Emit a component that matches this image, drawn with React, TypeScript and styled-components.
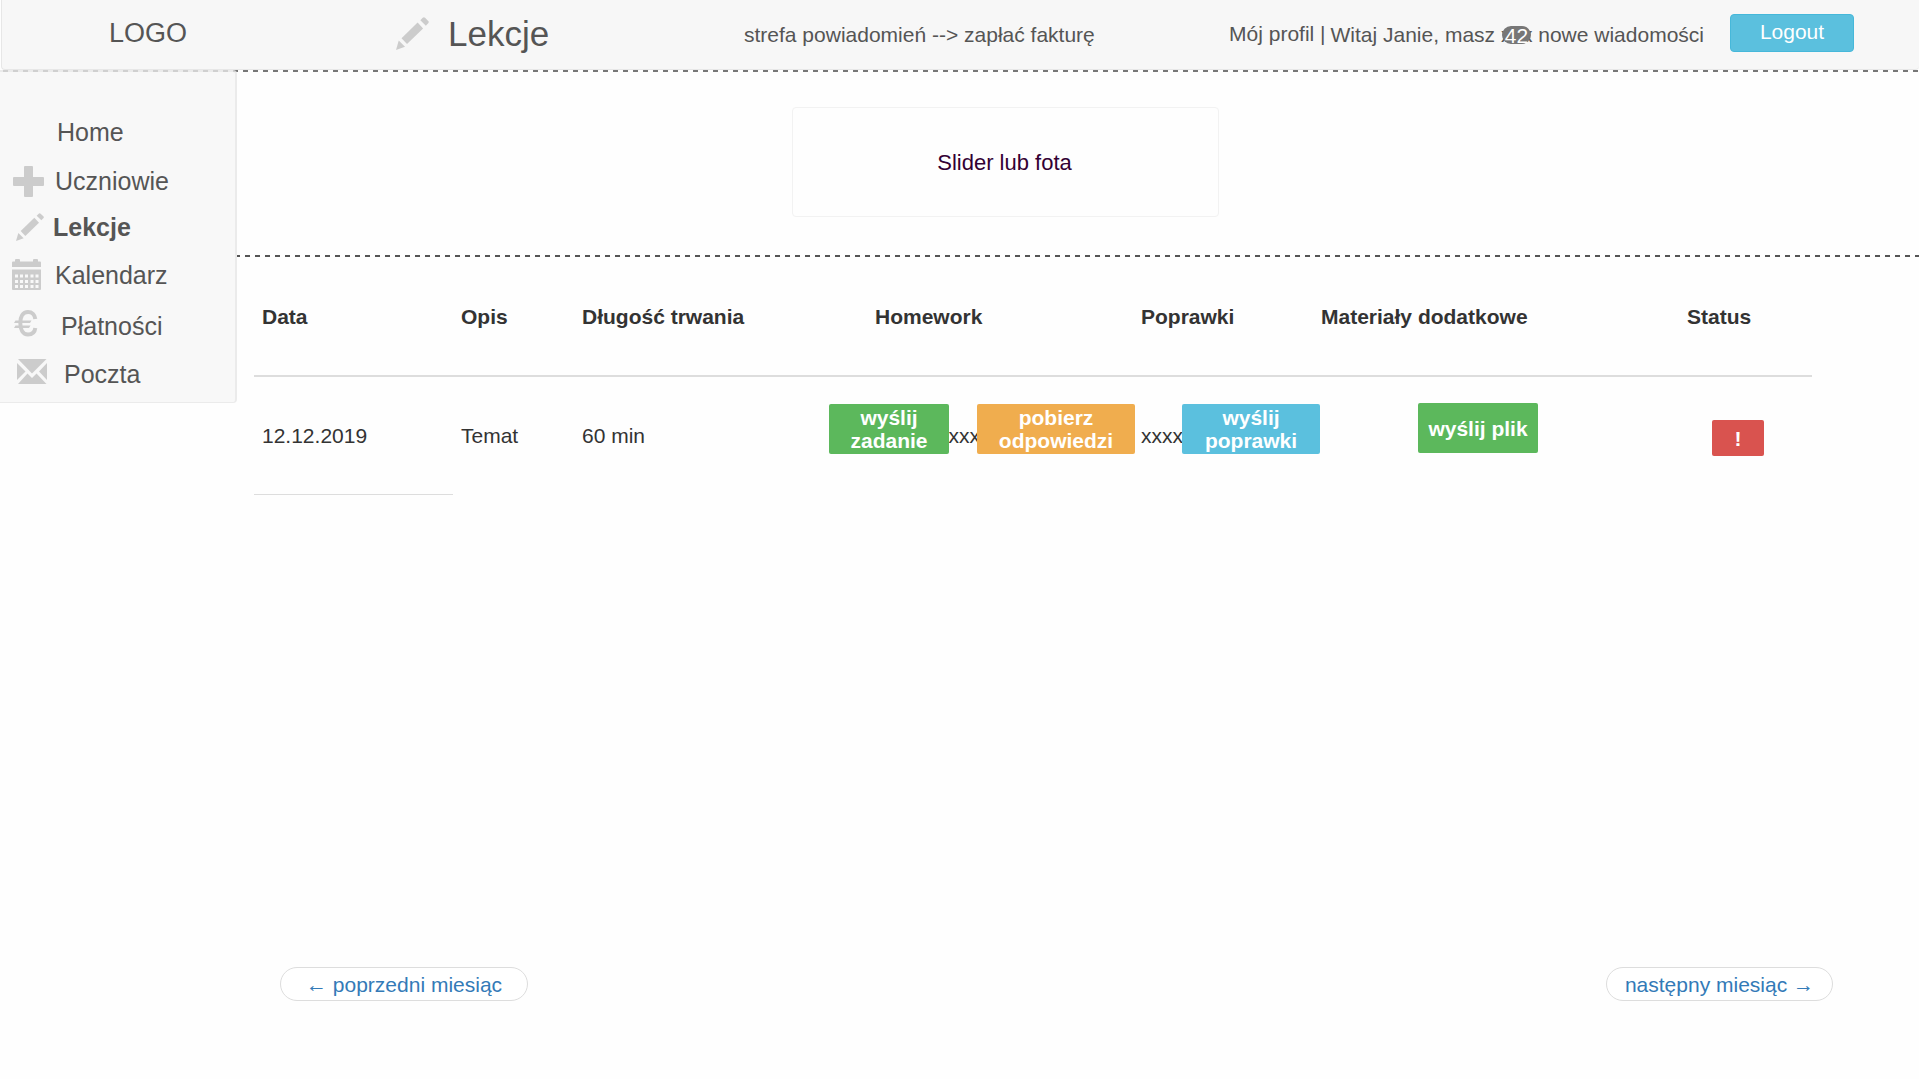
import React from "react";
import styled, { createGlobalStyle, css } from "styled-components";

const GlobalStyle = createGlobalStyle`
  *, *::before, *::after { box-sizing: border-box; }
  body {
    margin: 0;
    background: #fefefe;
    color: #333;
    font-family: "Liberation Sans", Arial, Helvetica, sans-serif;
    font-size: 21px;
    line-height: 23px;
  }
  button { font: inherit; cursor: pointer; }
  a { color: inherit; text-decoration: none; }
`;

const Shell = styled.div`
  display: flex;
  flex-direction: column;
  min-height: 100vh;
`;

const TopBar = styled.header`
  display: grid;
  grid-template-columns: 394px 348px 1fr auto;
  align-items: center;
  height: 70px;
  margin-left: 1px;
  padding: 0 65px 4px 0;
  background: #f7f7f7;
  border: 1px solid #e7e7e7;
  border-top: 0;
  border-right: 0;
  border-radius: 0 0 4px 4px;
  color: #555;
`;

const Dashes = styled.div<{ $color: string; $shift: number }>`
  height: 2px;
  background: repeating-linear-gradient(
      90deg,
      ${(p) => p.$color} 0 5px,
      transparent 5px 10px
    )
    ${(p) => p.$shift}px 0 / 10px 2px;
`;

const Brand = styled.a`
  padding-left: 107px;
  font-size: 27px;
  line-height: 32px;
`;

const PageTitle = styled.h1`
  display: flex;
  align-items: center;
  gap: 19px;
  margin: 0;
  padding-top: 2px;
  font-size: 35px;
  line-height: 40px;
  font-weight: 400;
`;

const Notice = styled.p`
  margin: 0;
  padding-top: 4px;
`;

const UserArea = styled.div`
  display: flex;
  align-items: center;
  white-space: nowrap;
`;

const ProfileLink = styled.a`
  padding-top: 2px;
`;

const Greeting = styled.p`
  margin: 0 26px 0 5px;
  padding-top: 4px;
`;

const Masked = styled.span`
  position: relative;
`;

const Badge = styled.span`
  position: absolute;
  left: 1px;
  top: 3px;
  width: 29px;
  height: 18px;
  border-radius: 9px;
  background: #777;
  color: #fff;
  line-height: 20px;
  text-align: center;
`;

const LogoutButton = styled.button`
  width: 124px;
  height: 38px;
  padding: 0 0 2px;
  border: 1px solid #46b8da;
  border-radius: 4px;
  background: #5bc0de;
  color: #fff;
`;

const Body = styled.div`
  display: flex;
  flex: 1;
  align-items: flex-start;
`;

const Sidebar = styled.nav`
  flex: 0 0 237px;
  position: relative;
  margin-top: -2px;
  padding: 36px 0 4px;
  background: #f8f8f8;
  background-clip: padding-box;
  border: solid rgba(231, 231, 231, 0.8);
  border-width: 2px 2px 1px 0;
  border-radius: 0 4px 4px 0;
  color: #555;
  font-size: 25px;
`;

const NavLink = styled.a<{ $height: number; $active?: boolean }>`
  display: flex;
  align-items: center;
  height: ${(p) => p.$height}px;
  font-weight: ${(p) => (p.$active ? 700 : 400)};
`;

const NavIcon = styled.span<{ $slot: number; $indent: number }>`
  display: flex;
  flex: none;
  width: ${(p) => p.$slot}px;
  padding-left: ${(p) => p.$indent}px;
`;

const Main = styled.main`
  display: flex;
  flex: 1;
  flex-direction: column;
  align-self: stretch;
  min-width: 0;
  padding-bottom: 78px;
`;

const Hero = styled.section`
  padding: 35px 0 38px 555px;
`;

const Slider = styled.div`
  display: flex;
  align-items: center;
  justify-content: center;
  width: 427px;
  height: 110px;
  padding-right: 2px;
  border: 1px solid #f2f2f2;
  border-radius: 4px;
  color: #330033;
  font-size: 22px;
`;

const TableArea = styled.section`
  padding: 0 107px 0 17px;
`;

const Table = styled.table`
  width: 100%;
  table-layout: fixed;
  border-collapse: separate;
  border-spacing: 0;
`;

const Column = styled.col<{ $width?: number }>`
  width: ${(p) => (p.$width ? `${p.$width}px` : "auto")};
`;

const HeadCell = styled.th`
  height: 120px;
  padding: 0 8px;
  border-bottom: 2px solid #ddd;
  text-align: left;
  white-space: nowrap;
`;

const Cell = styled.td<{ $ruled?: boolean; $indent?: number; $top?: number }>`
  position: relative;
  height: 118px;
  padding: 0 8px;
  border-bottom: 1px solid ${(p) => (p.$ruled ? "#ddd" : "transparent")};
  white-space: nowrap;
  ${(p) =>
    p.$top &&
    css`
      padding: ${p.$top}px 0 0 ${p.$indent}px;
      vertical-align: top;
    `}
`;

const tones = {
  green: "#5cb85c",
  orange: "#f0ad4e",
  blue: "#5bc0de",
  red: "#d9534f",
};

const Action = styled.button<{ $tone: keyof typeof tones; $width: number; $height?: number }>`
  display: block;
  width: ${(p) => p.$width}px;
  height: ${(p) => p.$height ?? 50}px;
  padding: 0;
  border: 0;
  border-radius: 2px;
  background: ${(p) => tones[p.$tone]};
  color: #fff;
  font-weight: 700;
  white-space: normal;
`;

const FloatingAction = styled(Action)<{ $left: number }>`
  position: absolute;
  z-index: 1;
  top: 27px;
  left: ${(p) => p.$left}px;
  padding: 0 16px;
`;

const Pager = styled.nav`
  display: flex;
  justify-content: space-between;
  margin-top: auto;
  padding: 0 86px 0 43px;
`;

const PagerLink = styled.a<{ $pad: number }>`
  height: 34px;
  padding: 5px ${(p) => p.$pad}px;
  border: 1px solid #ddd;
  border-radius: 17px;
  background: #fff;
  color: #337ab7;
`;

const Pencil = ({ size }: { size: number }) => (
  <svg width={size} height={size} viewBox="0 0 84 84" fill="#ccc" aria-hidden="true">
    <path d="M0 84 7 60 23 76Z" />
    <path d="M14 54 55 14 69 29 28 69Z" />
    <path d="M62 8 68 2Q71-1 74 2L82 10Q85 13 82 16L76 22Z" />
  </svg>
);

const Plus = () => (
  <svg width="31" height="31" viewBox="0 0 31 31" fill="#ccc" aria-hidden="true">
    <rect x="11" width="9" height="31" rx="1" />
    <rect y="11" width="31" height="9" rx="1" />
  </svg>
);

const Calendar = () => (
  <svg width="29" height="33" viewBox="0 0 29 33" fill="#ccc" aria-hidden="true">
    <path d="M0 8V3.5Q0 2.5 1 2.5H3V1Q3 0 4 0H7Q8 0 8 1V2.5H21V1Q21 0 22 0H25Q26 0 26 1V2.5H28Q29 2.5 29 3.5V8Z" />
    <path d="M0 10.5H29V30Q29 31 28 31H1Q0 31 0 30Z" />
    <g fill="#f8f8f8">
      {[15.5, 21, 26].map((y) =>
        [3, 8, 13, 18.5, 23.5].map((x) => (
          <rect key={`${x}-${y}`} x={x} y={y} width="3" height="3" />
        )),
      )}
    </g>
  </svg>
);

const Euro = () => (
  <svg width="24" height="33" viewBox="0 0 24 33" fill="none" stroke="#ccc" aria-hidden="true">
    <path d="M21.3 9C20.8 4.7 18 2 14 2C8.8 2 6.3 6.5 6.3 13S8.8 24.500 14 24.5C18 24.5 20.8 22 21.3 18" strokeWidth="4" />
    <path d="M0 13 1.5 10.5H17.5L16 13ZM0 18 1.5 15.5H16.5L15 18Z" fill="#ccc" stroke="none" />
  </svg>
);

const Envelope = () => (
  <svg width="30" height="31" viewBox="0 0 30 31" fill="#ccc" aria-hidden="true">
    <path d="M1 0H29.500L15 14.500Z" />
    <path d="M0 4 8.5 12.5 0 21Z" />
    <path d="M30 4 22 12.5 30 21Z" />
    <path d="M1 25 10.5 14.5 15 19 19.5 14.5 29.5 25Z" />
  </svg>
);

const navItems = [
  { label: "Home", slot: 57, indent: 0, height: 48, icon: null },
  { label: "Uczniowie", slot: 55, indent: 13, height: 50, icon: <Plus /> },
  { label: "Lekcje", slot: 53, indent: 16, height: 42, icon: <Pencil size={28} />, active: true },
  { label: "Kalendarz", slot: 55, indent: 12, height: 54, icon: <Calendar /> },
  { label: "Płatności", slot: 61, indent: 14, height: 48, icon: <Euro /> },
  { label: "Poczta", slot: 64, indent: 17, height: 48, icon: <Envelope /> },
];

const columns = [
  { title: "Data", width: 199 },
  { title: "Opis", width: 121 },
  { title: "Długość trwania", width: 293 },
  { title: "Homework", width: 266 },
  { title: "Poprawki", width: 180 },
  { title: "Materiały dodatkowe" },
  { title: "Status", width: 133 },
];

export default function App() {
  return (
    <Shell>
      <GlobalStyle />
      <TopBar>
        <Brand href="#">LOGO</Brand>
        <PageTitle>
          <Pencil size={33} />
          Lekcje
        </PageTitle>
        <Notice>strefa powiadomień --&gt; zapłać fakturę</Notice>
        <UserArea>
          <ProfileLink href="#profil">Mój profil |</ProfileLink>
          <Greeting>
            Witaj Janie, masz{" "}
            <Masked>
              xxx<Badge>42</Badge>
            </Masked>{" "}
            nowe wiadomości
          </Greeting>
          <LogoutButton type="button">Logout</LogoutButton>
        </UserArea>
      </TopBar>
      <Dashes $color="#777" $shift={3} />
      <Body>
        <Sidebar>
          {navItems.map((item) => (
            <NavLink key={item.label} href="#" $height={item.height} $active={item.active}>
              <NavIcon $slot={item.slot} $indent={item.indent}>
                {item.icon}
              </NavIcon>
              {item.label}
            </NavLink>
          ))}
        </Sidebar>
        <Main>
          <Hero>
            <Slider>Slider lub fota</Slider>
          </Hero>
          <Dashes $color="#555" $shift={8} />
          <TableArea>
            <Table>
              <colgroup>
                {columns.map((c) => (
                  <Column key={c.title} $width={c.width} />
                ))}
              </colgroup>
              <thead>
                <tr>
                  {columns.map((c) => (
                    <HeadCell key={c.title} scope="col">
                      {c.title}
                    </HeadCell>
                  ))}
                </tr>
              </thead>
              <tbody>
                <tr>
                  <Cell $ruled>12.12.2019</Cell>
                  <Cell>Temat</Cell>
                  <Cell>60 min</Cell>
                  <Cell>
                    xxxxxxxxxx
                    <FloatingAction type="button" $tone="green" $width={120} $left={-38}>
                      wyślij zadanie
                    </FloatingAction>
                    <FloatingAction type="button" $tone="orange" $width={158} $left={110}>
                      pobierz odpowiedzi
                    </FloatingAction>
                  </Cell>
                  <Cell>
                    xxxxx
                    <FloatingAction type="button" $tone="blue" $width={138} $left={49}>
                      wyślij poprawki
                    </FloatingAction>
                  </Cell>
                  <Cell $top={26} $indent={105}>
                    <Action type="button" $tone="green" $width={120}>
                      wyślij plik
                    </Action>
                  </Cell>
                  <Cell $top={43} $indent={33}>
                    <Action type="button" $tone="red" $width={52} $height={36}>
                      !
                    </Action>
                  </Cell>
                </tr>
              </tbody>
            </Table>
          </TableArea>
          <Pager>
            <PagerLink href="#" $pad={25}>
              ← poprzedni miesiąc
            </PagerLink>
            <PagerLink href="#" $pad={18}>
              następny miesiąc →
            </PagerLink>
          </Pager>
        </Main>
      </Body>
    </Shell>
  );
}
